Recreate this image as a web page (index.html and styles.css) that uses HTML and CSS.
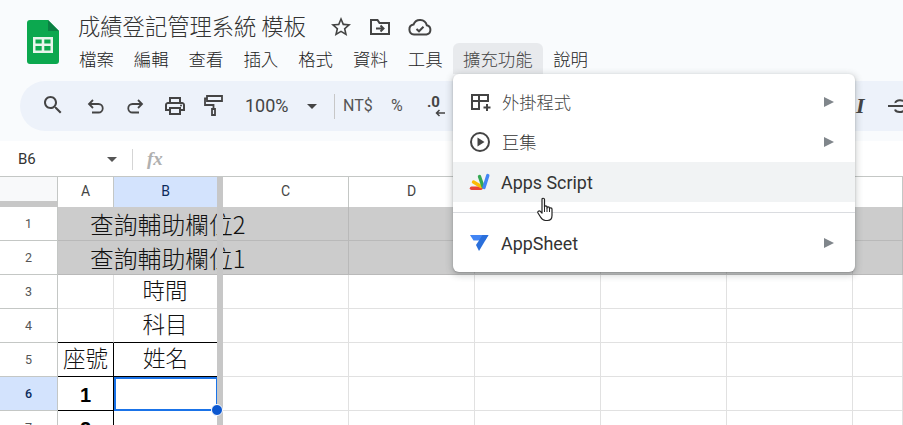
FILE: index.html
```html
<!DOCTYPE html>
<html lang="zh-Hant">
<head>
    <meta charset="UTF-8">
    <title>成績登記管理系統 模板</title>
    <link rel="stylesheet" href="styles.css">
</head>
<body>
    <div class="header">
        <div class="top">
            <svg class="logo" width="32" height="44" viewBox="0 0 32 44">
                <path d="M3 0H21L32 11V41A3 3 0 0 1 29 44H3A3 3 0 0 1 0 41V3A3 3 0 0 1 3 0Z" fill="#0ca84f"/>
                <path d="M21 0L32 11H21Z" fill="#0b8043"/>
                <path d="M6 17H26V33H6ZM8.5 19.5V23.5H14.7V19.5ZM17.3 19.5V23.5H23.5V19.5ZM8.5 26V30.5H14.7V26ZM17.3 26V30.5H23.5V26Z" fill="#e8f5ec" fill-rule="evenodd"/>
            </svg>
            <div class="title-col">
                <div class="title-row">
                    <span class="title">成績登記管理系統 模板</span>
                    <svg class="title-icon star" width="24" height="24" viewBox="0 0 24 24"><path fill="#444" d="M22 9.24l-7.19-.62L12 2 9.19 8.63 2 9.24l5.46 4.73L5.82 21 12 17.27 18.18 21l-1.63-7.03L22 9.24zM12 15.4l-3.76 2.27 1-4.28-3.32-2.88 4.38-.38L12 6.1l1.71 4.04 4.38.38-3.32 2.88 1 4.28L12 15.4z"/></svg>
                    <svg class="title-icon" width="24" height="24" viewBox="0 0 24 24"><path fill="none" stroke="#444" stroke-width="2" d="M3 6V19H21V8H11.5L9.5 5H3Z"/><path fill="none" stroke="#444" stroke-width="2" d="M8 13.5H15M12.5 10.5L15.5 13.5L12.5 16.5"/></svg>
                    <svg class="title-icon" width="26" height="24" viewBox="0 0 26 24"><path fill="none" stroke="#444" stroke-width="2" d="M7 19.5A5 5 0 0 1 6.5 9.6A7 7 0 0 1 19.8 10.3A4.7 4.7 0 0 1 19.5 19.5Z"/><path fill="none" stroke="#444" stroke-width="2" d="M9.5 14L12 16.3L16.5 11.8"/></svg>
                </div>
                <div class="menubar">
                    <span class="menubar-item">檔案</span>
                    <span class="menubar-item">編輯</span>
                    <span class="menubar-item">查看</span>
                    <span class="menubar-item">插入</span>
                    <span class="menubar-item">格式</span>
                    <span class="menubar-item">資料</span>
                    <span class="menubar-item">工具</span>
                    <span class="menubar-item active">擴充功能</span>
                    <span class="menubar-item">說明</span>
                </div>
            </div>
        </div>
        <div class="toolbar">
            <svg class="tool tool-search" width="24" height="24" viewBox="0 0 24 24"><path fill="#444" d="M15.5 14h-.79l-.28-.27C15.41 12.59 16 11.11 16 9.5 16 5.91 13.09 3 9.5 3S3 5.91 3 9.5 5.91 16 9.5 16c1.61 0 3.09-.59 4.23-1.57l.27.28v.79l5 4.99L20.49 19l-4.99-5zm-6 0C7.01 14 5 11.99 5 9.5S7.01 5 9.5 5 14 7.01 14 9.5 11.99 14 9.5 14z"/></svg>
            <svg class="tool tool-undo" width="22" height="22" viewBox="0 0 22 22"><path fill="none" stroke="#444" stroke-width="1.8" d="M8 5L4 9L8 13M4 9H13.5A4 4 0 0 1 13.5 17.5H7"/></svg>
            <svg class="tool tool-redo" width="22" height="22" viewBox="0 0 22 22"><path fill="none" stroke="#444" stroke-width="1.8" d="M14 5L18 9L14 13M18 9H8.5A4 4 0 0 0 8.5 17.5H15"/></svg>
            <svg class="tool tool-print" width="24" height="24" viewBox="0 0 24 24"><path fill="#444" d="M19 8h-1V3H6v5H5c-1.66 0-3 1.34-3 3v6h4v4h12v-4h4v-6c0-1.66-1.34-3-3-3zM8 5h8v3H8V5zm8 12v2H8v-4h8v2zm2-2v-2H6v2H4v-4c0-.55.45-1 1-1h14c.55 0 1 .45 1 1v4h-2z"/><circle fill="#444" cx="18" cy="11.5" r="1"/></svg>
            <svg class="tool tool-paint" width="20" height="24" viewBox="0 0 20 24"><path fill="none" stroke="#444" stroke-width="1.8" d="M3 3H18V8H3ZM3 5.5H1V12H9.5V16M8 16H11V22H8Z"/></svg>
            <span class="zoom-value">100%</span>
            <span class="tool-caret"></span>
            <span class="tool-divider"></span>
            <span class="tool-text tool-currency">NT$</span>
            <span class="tool-text tool-percent">%</span>
            <span class="tool-decimal">.0<svg width="10" height="8" viewBox="0 0 10 8"><path fill="none" stroke="#444" stroke-width="1.5" d="M10 4H2M4.5 1L1.5 4L4.5 7"/></svg></span>
            <span class="tool-italic">I</span>
            <svg class="tool-strike" width="24" height="24" viewBox="0 0 24 24"><path fill="none" stroke="#444" stroke-width="2" d="M0 12H24M17 8.5C16 5.5 7 5.5 7.5 9M7 15.5C8 19 17 19 16.5 14.5"/></svg>
        </div>
    </div>

    <div class="formula-bar">
        <span class="cell-name">B6</span>
        <span class="name-caret"></span>
        <span class="formula-divider"></span>
        <span class="fx">fx</span>
    </div>

    <div class="sheet">
        <div class="row col-header">
            <div class="corner"></div>
            <div class="col-label">A</div>
            <div class="col-label selected">B</div>
            <div class="col-label">C</div>
            <div class="col-label">D</div>
            <div class="col-label"></div>
            <div class="col-label"></div>
            <div class="col-label"></div>
            <div class="col-label"></div>
        </div>
        <div class="row grey">
            <div class="row-label">1</div>
            <div class="cell merged">查詢輔助欄位2</div>
            <div class="cell"></div><div class="cell"></div><div class="cell"></div><div class="cell"></div><div class="cell"></div><div class="cell"></div>
        </div>
        <div class="row grey">
            <div class="row-label">2</div>
            <div class="cell merged">查詢輔助欄位1</div>
            <div class="cell"></div><div class="cell"></div><div class="cell"></div><div class="cell"></div><div class="cell"></div><div class="cell"></div>
        </div>
        <div class="row">
            <div class="row-label">3</div>
            <div class="cell"></div>
            <div class="cell text">時間</div>
            <div class="cell"></div><div class="cell"></div><div class="cell"></div><div class="cell"></div><div class="cell"></div><div class="cell"></div>
        </div>
        <div class="row">
            <div class="row-label">4</div>
            <div class="cell table-top"></div>
            <div class="cell text table-top">科目</div>
            <div class="cell"></div><div class="cell"></div><div class="cell"></div><div class="cell"></div><div class="cell"></div><div class="cell"></div>
        </div>
        <div class="row">
            <div class="row-label">5</div>
            <div class="cell text table-cell">座號</div>
            <div class="cell text table-cell last">姓名</div>
            <div class="cell"></div><div class="cell"></div><div class="cell"></div><div class="cell"></div><div class="cell"></div><div class="cell"></div>
        </div>
        <div class="row">
            <div class="row-label selected">6</div>
            <div class="cell num table-cell">1</div>
            <div class="cell table-cell last active-cell"><span class="fill-handle"></span></div>
            <div class="cell"></div><div class="cell"></div><div class="cell"></div><div class="cell"></div><div class="cell"></div><div class="cell"></div>
        </div>
        <div class="row">
            <div class="row-label">7</div>
            <div class="cell num table-cell">2</div>
            <div class="cell table-cell last"></div>
            <div class="cell"></div><div class="cell"></div><div class="cell"></div><div class="cell"></div><div class="cell"></div><div class="cell"></div>
        </div>
        <div class="freeze-bar"></div>
    </div>

    <div class="menu">
        <div class="menu-item">
            <svg class="menu-icon" width="24" height="24" viewBox="0 0 24 24"><path fill="none" stroke="#444" stroke-width="2" d="M12 19H4V5H20V12M4 11H20M11 5V19"/><path fill="none" stroke="#444" stroke-width="2" d="M19 14V21M15.5 17.5H22.5"/></svg>
            <span class="menu-label muted">外掛程式</span>
            <span class="menu-arrow"></span>
        </div>
        <div class="menu-item">
            <svg class="menu-icon" width="24" height="24" viewBox="0 0 24 24"><circle cx="12" cy="12" r="9" fill="none" stroke="#444" stroke-width="2"/><path fill="#444" d="M9.5 7.5L16.5 12L9.5 16.5Z"/></svg>
            <span class="menu-label">巨集</span>
            <span class="menu-arrow"></span>
        </div>
        <div class="menu-item hover">
            <svg class="menu-icon" width="24" height="24" viewBox="0 0 24 24" fill="none" stroke-width="3.4" stroke-linecap="round">
                <path d="M3.5 18.2H13" stroke="#ea4335"/>
                <path d="M5.5 12L13 16.5" stroke="#fbbc04"/>
                <path d="M11.5 6.5L15 16.5" stroke="#34a853"/>
                <path d="M19.8 5.5L16 17.5" stroke="#4285f4"/>
            </svg>
            <span class="menu-label roboto">Apps Script</span>
        </div>
        <div class="menu-sep"></div>
        <div class="menu-item">
            <svg class="menu-icon" width="24" height="24" viewBox="0 0 24 24">
                <path d="M2 4H20.5L17 9.5H5.5Z" fill="#4285f4"/>
                <path d="M20.5 4L11 20L8 14L14.5 4Z" fill="#2a6fdb"/>
            </svg>
            <span class="menu-label roboto">AppSheet</span>
            <span class="menu-arrow"></span>
        </div>
    </div>

    <svg class="pointer" width="20" height="26" viewBox="0 0 20 26">
        <path fill="#fff" stroke="#222" stroke-width="1.2" stroke-linejoin="round" d="M5 2.5C5 .8 7.5 .8 7.5 2.5V10C7.5 8.5 10 8.5 10 10V11C10 9.5 12.5 9.5 12.5 11V11.8C12.5 10.5 15 10.5 15 12V18.5C15 21.5 13.5 23.500 10.5 23.5H8.5C6 23.5 5 22.5 3.5 20L1 16C.2 14.5 2 13.2 3.3 14.3L5 16Z"/>
        <path fill="none" stroke="#222" stroke-width="1" d="M7.5 10V15M10 11V15M12.5 11.8V15"/>
    </svg>
</body>
</html>
```

FILE: styles.css
```css
* {
    box-sizing: border-box;
}
body {
    position: relative;
    width: 903px;
    height: 425px;
    margin: 0;
    overflow: hidden;
    background: white;
    color: #222;
    font-family: "Noto Sans CJK TC", Roboto, sans-serif;
    font-weight: 300;
}

/* header */
.header {
    height: 141px;
    padding-top: 10px;
    background: #f9fbfd;
}
.top {
    display: flex;
    height: 64px;
}
.logo {
    flex-shrink: 0;
    margin: 10px 0 0 27px;
}
.title-col {
    margin-left: 10px;
}
.title-row {
    display: flex;
    align-items: center;
    height: 30px;
    margin-left: 9px;
}
.title {
    width: 248px;
    font-size: 22.3px;
    line-height: 30px;
    white-space: nowrap;
    color: #333;
}
.title-icon {
    position: relative;
    top: 2px;
    margin-right: 15px;
}
.title-icon.star {
    margin-left: 3px;
}
.menubar {
    display: flex;
    height: 31px;
    margin-top: 3px;
}
.menubar-item {
    padding: 0 10px;
    font-size: 17.4px;
    line-height: 31px;
    white-space: nowrap;
    color: #222;
    border-radius: 6px 6px 0 0;
}
.menubar-item.active {
    padding: 0 10.5px;
    background: #e8eaed;
    color: #444;
}

.toolbar {
    position: relative;
    height: 50px;
    margin: 7px 0 0 20px;
    border-radius: 25px 0 0 25px;
    background: #edf2fa;
}
.tool,
.tool-text,
.tool-caret,
.tool-divider,
.zoom-value,
.tool-decimal,
.tool-italic,
.tool-strike {
    position: absolute;
}
.tool-search { left: 21px; top: 12px; }
.tool-undo { left: 65px; top: 14px; }
.tool-redo { left: 104px; top: 14px; }
.tool-print { left: 143px; top: 13px; }
.tool-paint { left: 184px; top: 12px; }
.zoom-value {
    left: 225px;
    top: 11px;
    font: 18px/28px Roboto, sans-serif;
    color: #444;
}
.tool-caret {
    left: 287px;
    top: 23px;
    border: 5px solid transparent;
    border-top-color: #444;
    border-bottom: 0;
}
.tool-divider {
    left: 314px;
    top: 13px;
    width: 1px;
    height: 25px;
    background: #c7c7c7;
}
.tool-text {
    top: 11px;
    font: 16px/28px Roboto, sans-serif;
    color: #555;
}
.tool-currency { left: 323px; }
.tool-percent { left: 371px; }
.tool-decimal {
    left: 407px;
    top: 8px;
    font: bold 15px/26px Roboto, sans-serif;
    color: #444;
}
.tool-decimal svg {
    position: absolute;
    left: 8px;
    top: 20px;
}
.tool-italic {
    left: 836px;
    top: 10px;
    font: italic bold 22px/30px "Liberation Serif", serif;
    color: #444;
}
.tool-strike {
    left: 868px;
    top: 13px;
}

/* formula bar */
.formula-bar {
    position: relative;
    height: 36px;
    background: white;
    border-bottom: 1px solid #c4c7c5;
}
.cell-name {
    position: absolute;
    left: 18px;
    top: 6px;
    font: 15px/24px Roboto, sans-serif;
    color: #333;
}
.name-caret {
    position: absolute;
    left: 107px;
    top: 16px;
    border: 5px solid transparent;
    border-top-color: #555;
    border-bottom: 0;
}
.formula-divider {
    position: absolute;
    left: 132px;
    top: 8px;
    width: 1px;
    height: 21px;
    background: #d5d5d5;
}
.fx {
    position: absolute;
    left: 147px;
    top: 4px;
    font: italic bold 19px/28px "Liberation Serif", serif;
    color: #b0b0b0;
}

/* grid */
.sheet {
    position: relative;
    height: 248px;
    overflow: hidden;
}
.row {
    display: grid;
    grid-template-columns: 58px 56px 109px 126px 126px 126px 126px 126px 50px;
    grid-template-rows: 34px;
    height: 34px;
}
.col-header {
    grid-template-rows: 30px;
    height: 30px;
}
.corner {
    height: 30px;
    background: #f8f9fa;
    border-bottom: 6px solid #c7c7c7;
    border-right: 1px solid #c4c7c5;
}
.col-label {
    border-right: 1px solid #c4c7c5;
    font: 14px/29px Roboto, sans-serif;
    text-align: center;
    color: #444;
}
.col-label.selected {
    background: #d3e3fd;
    padding-right: 5px;
    color: #0b2a5b;
}
.row-label {
    border-right: 1px solid #c4c7c5;
    border-bottom: 1px solid #c4c7c5;
    background: white;
    font: 12.5px/33px Roboto, sans-serif;
    text-align: center;
    color: #555;
}
.row-label.selected {
    background: #d3e3fd;
    color: #0b2a5b;
    font-weight: 500;
}
.cell {
    position: relative;
    border-right: 1px solid #e1e1e1;
    border-bottom: 1px solid #e1e1e1;
}
.grey .cell {
    background: #cccccc;
    border-color: #b9b9b9;
}
.merged {
    z-index: 1;
    grid-column: span 2;
    padding-left: 32px;
    font-size: 23.8px;
    line-height: 33px;
    white-space: nowrap;
    color: #111;
}
.text {
    padding-right: 6px;
    font-size: 22.5px;
    line-height: 28px;
    text-align: center;
    color: #111;
}
.table-top {
    border-bottom-color: black;
}
.table-cell {
    border-right-color: black;
    border-bottom-color: black;
}
.table-cell.text {
    padding: 0;
}
.table-cell.last {
    margin-right: 5px;
}
.num {
    padding-top: 2px;
    font: bold 20px/32px "Liberation Sans", sans-serif;
    text-align: center;
    color: black;
}
.active-cell {
    outline: 2px solid #1a73e8;
    outline-offset: -2px;
}
.fill-handle {
    position: absolute;
    right: -6px;
    bottom: -6px;
    z-index: 3;
    width: 12px;
    height: 12px;
    border: 1px solid white;
    border-radius: 50%;
    background: #0b57d0;
}
.freeze-bar {
    position: absolute;
    left: 217px;
    top: 0;
    bottom: 0;
    z-index: 2;
    width: 6px;
    background: #c7c7c7;
}

/* extensions menu */
.menu {
    position: absolute;
    left: 453px;
    top: 74px;
    z-index: 5;
    width: 402px;
    height: 198px;
    padding-top: 8px;
    background: white;
    border-radius: 6px;
    box-shadow: 0 2px 6px 2px rgba(60, 64, 67, 0.2), 0 1px 2px rgba(60, 64, 67, 0.3);
}
.menu-item {
    display: flex;
    align-items: center;
    height: 40px;
    padding-left: 15px;
}
.menu-item.hover {
    background: #f1f3f4;
}
.menu-icon {
    flex-shrink: 0;
}
.menu-label {
    margin-left: 10px;
    font-size: 17.3px;
    line-height: 40px;
    color: #333;
}
.menu-label.muted {
    color: #444;
}
.menu-label.roboto {
    margin: 2px 0 0 9px;
    font: 17.9px/40px Roboto, sans-serif;
    color: #333;
}
.menu-arrow {
    margin-left: auto;
    margin-right: 21px;
    border-left: 10px solid #80868b;
    border-top: 5.5px solid transparent;
    border-bottom: 5.5px solid transparent;
}
.menu-sep {
    height: 1px;
    margin: 10px 0;
    background: #dadce0;
}
.pointer {
    position: absolute;
    left: 537px;
    top: 197px;
    z-index: 6;
}
```
